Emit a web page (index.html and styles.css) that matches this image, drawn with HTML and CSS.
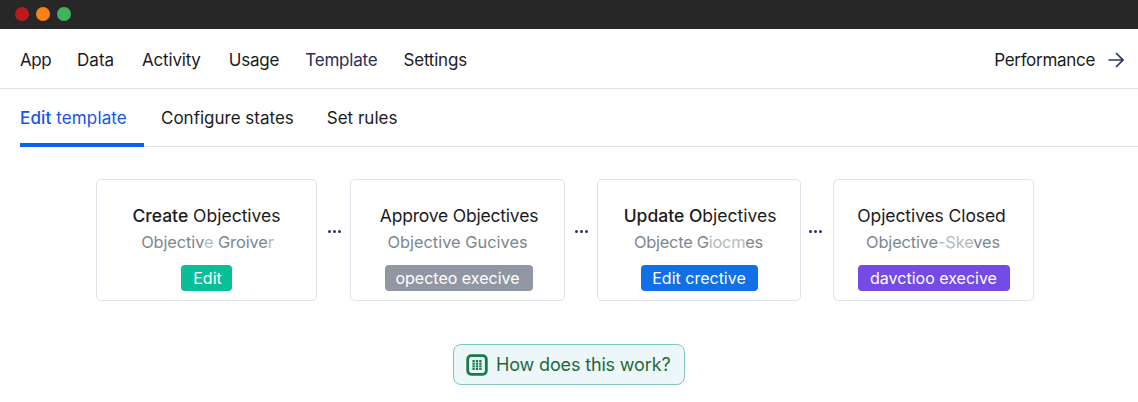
FILE: index.html
```html
<!DOCTYPE html>
<html lang="en">
<head>
  <meta charset="utf-8">
  <title>Edit template</title>
  <link rel="stylesheet" href="styles.css">
</head>
<body>
  <div class="titlebar">
    <span class="dot red"></span>
    <span class="dot orange"></span>
    <span class="dot green"></span>
  </div>

  <nav class="main-nav">
    <a class="home">App</a>
    <a class="data">Data</a>
    <a>Activity</a>
    <a>Usage</a>
    <a class="active">Template</a>
    <a class="settings">Settings</a>
    <a class="performance">Performance
      <svg width="16" height="16" viewBox="0 0 16 16" fill="none" stroke="#2b3763" stroke-width="1.7">
        <path d="M.5 8H15M8 1l7 7-7 7"/>
      </svg>
    </a>
  </nav>

  <div class="tabs">
    <a class="tab active"><b>Edit</b> template</a>
    <a class="tab">Configure states</a>
    <a class="tab">Set rules</a>
  </div>

  <!-- Workflow states -->
  <div class="flow">
    <div class="card create">
      <h2><b>Create</b> Objectives</h2>
      <p>Objectiv<span class="faded">e</span> Groive<span class="faded">r</span></p>
      <span class="badge teal">Edit</span>
    </div>
    <div class="more"><i></i><i></i><i></i></div>
    <div class="card approve">
      <h2>Approve Objectives</h2>
      <p>Objective Gucives</p>
      <span class="badge gray">opecteo execive</span>
    </div>
    <div class="more"><i></i><i></i><i></i></div>
    <div class="card update">
      <h2><b>Update O</b>bjectives</h2>
      <p>Objecte G<span class="faded">iocm</span>es</p>
      <span class="badge blue">Edit crective</span>
    </div>
    <div class="more"><i></i><i></i><i></i></div>
    <div class="card closed">
      <h2>Opjectives Closed</h2>
      <p>Objective<span class="faded">-Ske</span>ves</p>
      <span class="badge purple">davctioo execive</span>
    </div>
  </div>

  <button class="help">
    <svg width="22" height="22" viewBox="0 0 22 22">
      <rect x="1.7" y="1.7" width="18.6" height="18.6" rx="3.5" fill="none" stroke="#127f49" stroke-width="2.8"/>
      <path d="M7.6 6v10M11 6v10M14.4 6v10" stroke="#127f49" stroke-width="2.3" stroke-dasharray="2.1 .5"/>
    </svg>
    How does this work?
  </button>
</body>
</html>
```

FILE: styles.css
```css
* {
  box-sizing: border-box;
}
body {
  margin: 0;
  background: #fff;
  font-family: Inter, "Liberation Sans", sans-serif;
  font-size: 17px;
  color: #1b1b1d;
}
b {
  font-weight: 500;
}
.titlebar {
  display: flex;
  align-items: center;
  gap: 7px;
  height: 29px;
  padding: 0 15px 2px;
  background: #272727;
}
.dot {
  width: 14px;
  height: 14px;
  border-radius: 50%;
}
.red { background: #bd1a1d; }
.orange { background: #f98116; }
.green { background: #3fb45c; }

.main-nav {
  display: flex;
  align-items: center;
  gap: 28px;
  height: 60px;
  padding: 2px 14px 0 20px;
  border-bottom: 1px solid #dfe1e9;
  letter-spacing: -.2px;
}
.main-nav .home {
  margin-right: -2px;
  letter-spacing: -.5px;
}
.main-nav .data {
  letter-spacing: 0;
}
.main-nav .active {
  margin-left: -2px;
  color: #292c62;
}
.main-nav .settings {
  margin-left: -2px;
}
.performance {
  display: flex;
  align-items: center;
  gap: 13px;
  margin-left: auto;
}
.main-nav .performance {
  letter-spacing: -.3px;
}

.tabs {
  display: flex;
  height: 58px;
  margin-left: 20px;
  border-bottom: 1px solid #dfe3ec;
}
.tab {
  margin-right: 33px;
  line-height: 59px;
}
.tab.active {
  width: 124px;
  height: 58px;
  margin-right: 17px;
  border-bottom: 4px solid #0b63f0;
  letter-spacing: .13px;
  color: #1554e8;
}

.flow {
  display: flex;
  margin: 32px 0 0 96px;
}
.card {
  height: 122px;
  padding-top: 23px;
  border: 1px solid #e0e2eb;
  border-radius: 5px;
  text-align: center;
}
.create { width: 221px; }
.approve { width: 215px; }
.update { width: 204px; }
.closed { width: 201px; }
.card h2 {
  margin: 0;
  font-size: 17.5px;
  font-weight: 400;
  line-height: 26px;
}
.approve h2 {
  padding-left: 3px;
  letter-spacing: -.2px;
}
.update h2 {
  padding-left: 2px;
}
.closed h2 {
  padding-right: 4px;
  letter-spacing: -.1px;
}
.card p {
  margin: 0 0 9px;
  font-size: 16.4px;
  line-height: 27px;
  color: #7d868d;
}
.create p {
  padding-left: 2px;
  letter-spacing: -.1px;
}
.update p {
  padding-right: 1px;
  letter-spacing: -.25px;
}
.closed p {
  padding-right: 1px;
  letter-spacing: -.15px;
}
.faded {
  color: #b3bac0;
}
.badge {
  display: block;
  height: 26px;
  margin: 0 auto;
  border-radius: 4px;
  line-height: 26px;
  font-size: 16px;
  color: #fff;
}
.teal {
  width: 51px;
  padding-left: 2px;
  background: #0abf98;
}
.gray {
  position: relative;
  left: 1px;
  width: 148px;
  padding-right: 2px;
  background: #9097a2;
}
.blue { width: 117px; background: #1070e6; }
.purple { width: 152px; background: #754be5; }

.more {
  display: flex;
  align-items: center;
  justify-content: center;
  gap: 2px;
  width: 32px;
  margin-top: -17px;
}
.create + .more {
  width: 33px;
  padding-left: 2px;
}
.update + .more {
  padding-right: 3px;
}
.more i {
  width: 3px;
  height: 3px;
  border-radius: 50%;
  background: #30345c;
}

.help {
  display: flex;
  align-items: center;
  gap: 8px;
  width: 232px;
  height: 41px;
  margin: 43px 0 0 453px;
  padding: 0 0 0 12px;
  border: 1px solid #7fc7b9;
  border-radius: 8px;
  background: #edf6f8;
  font: 18px Inter, "Liberation Sans", sans-serif;
  letter-spacing: -.15px;
  color: #1d6a38;
}
```
